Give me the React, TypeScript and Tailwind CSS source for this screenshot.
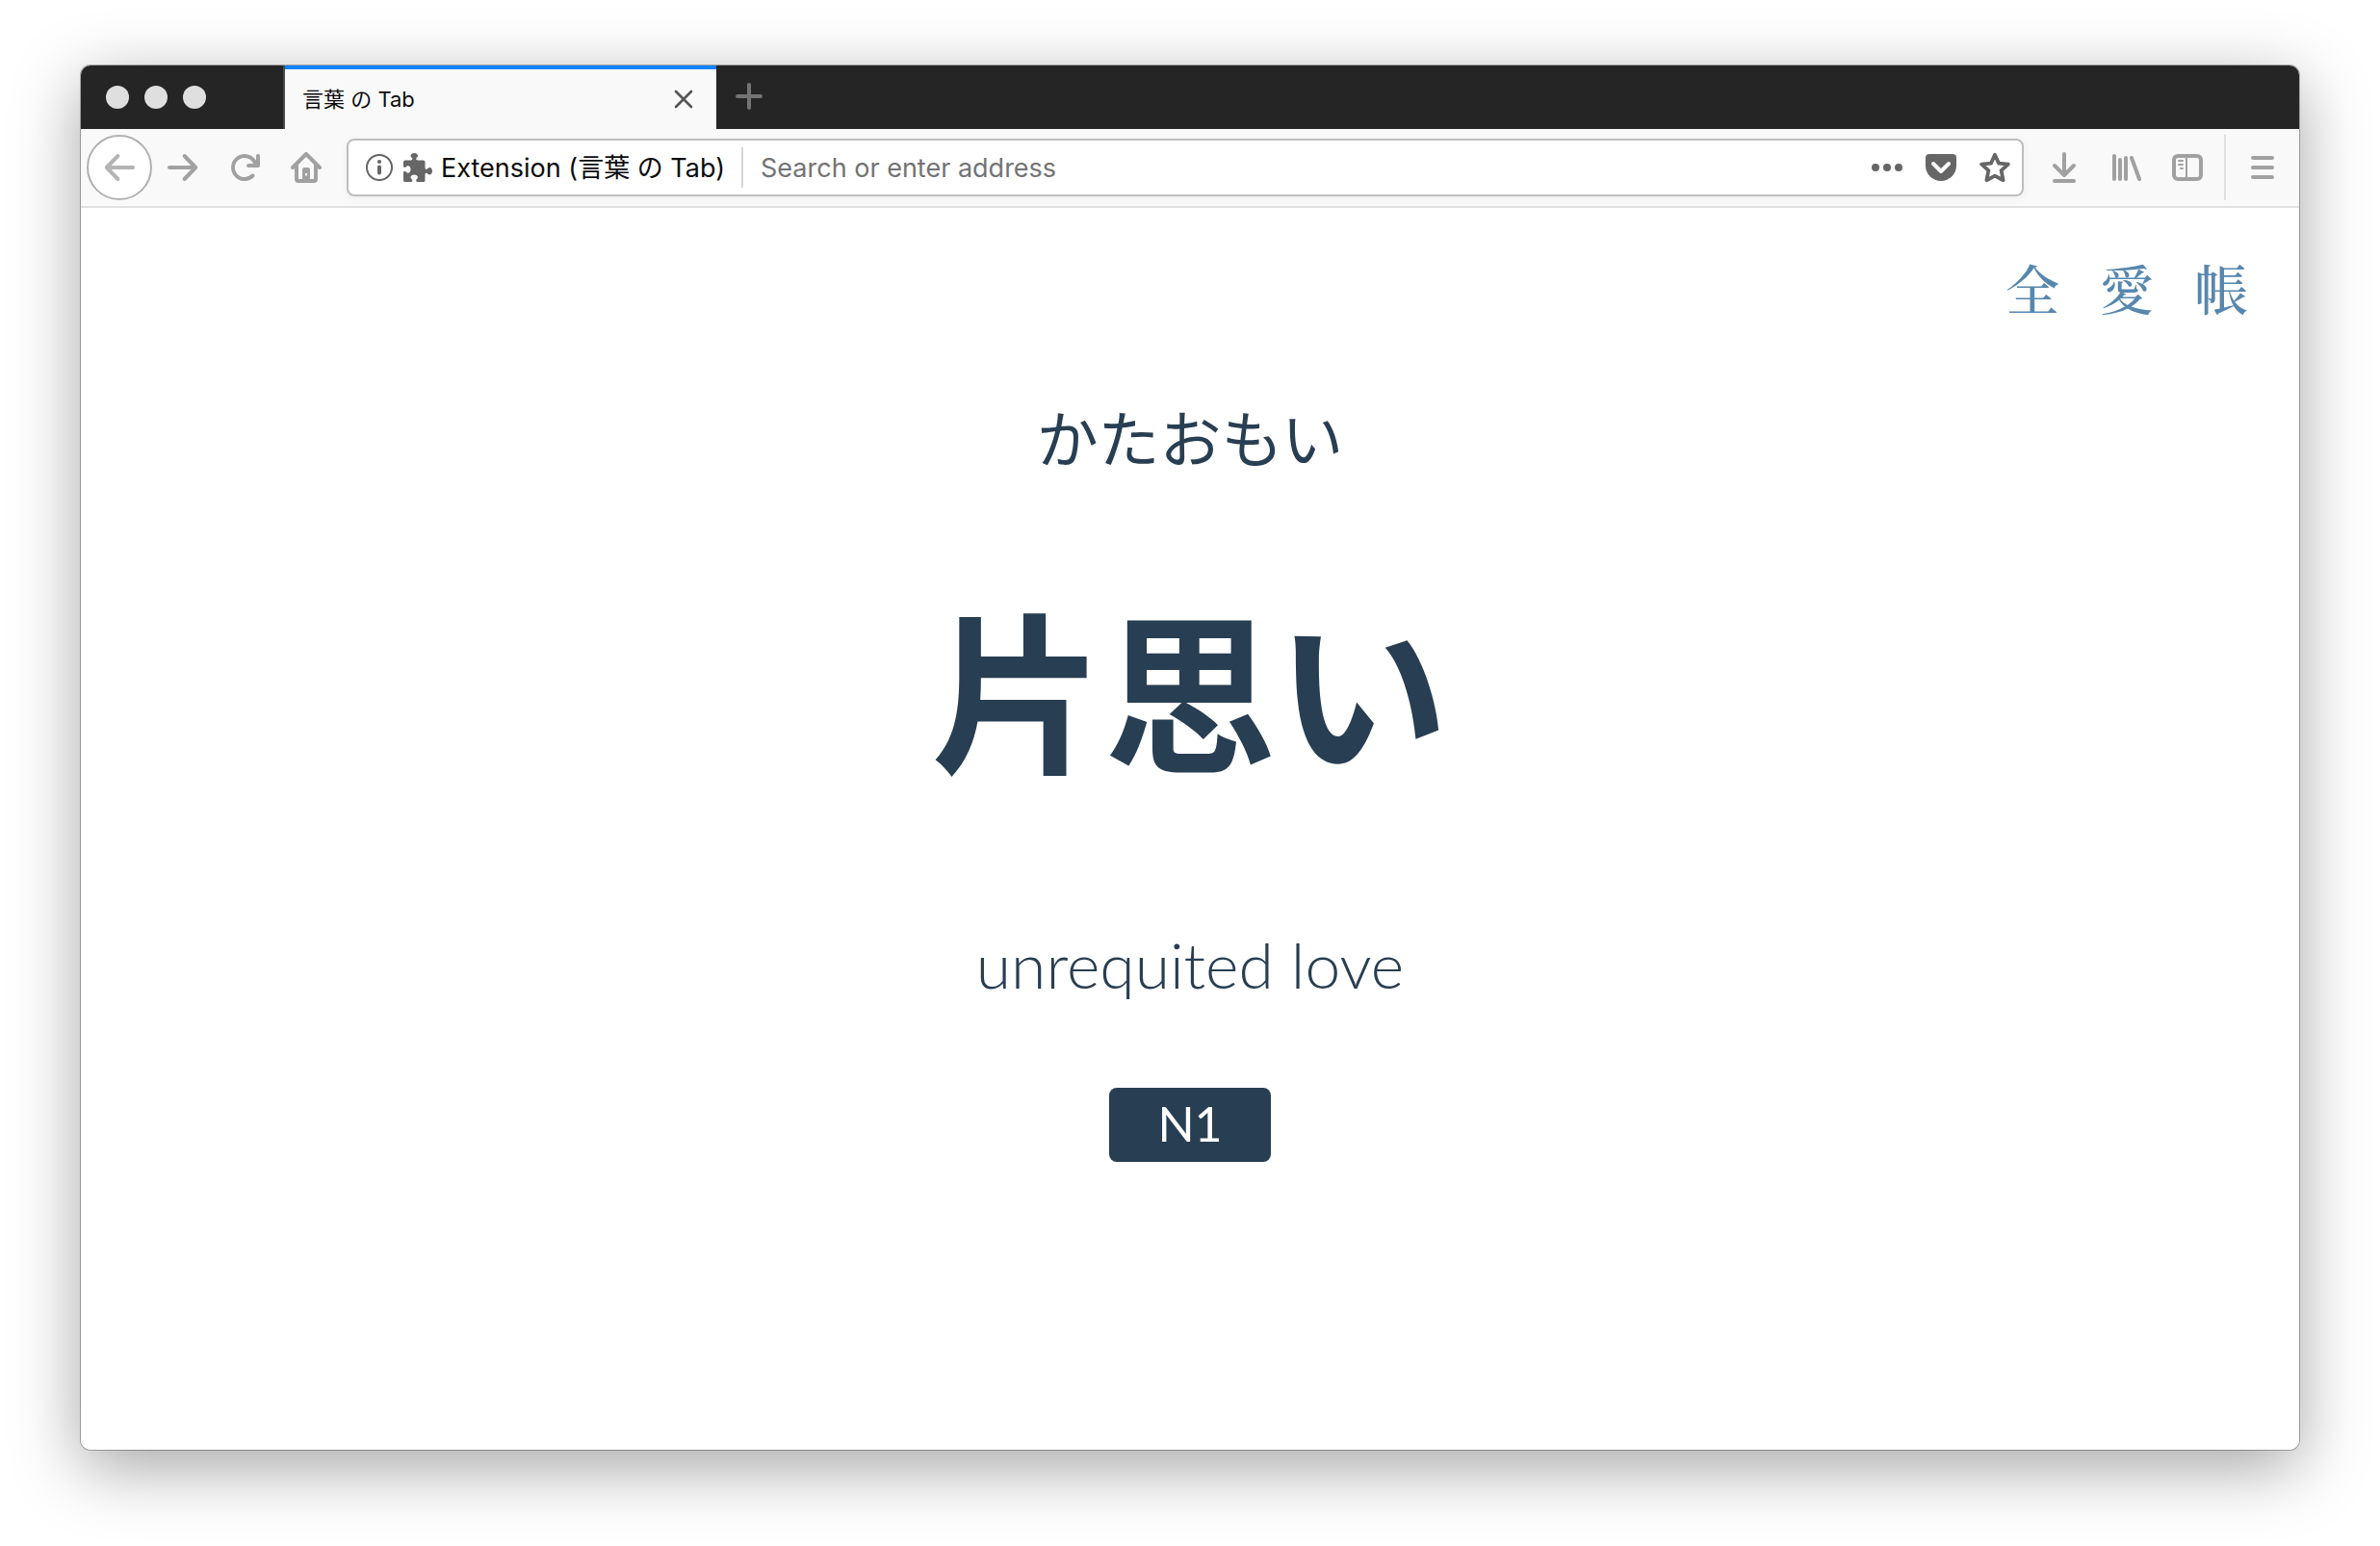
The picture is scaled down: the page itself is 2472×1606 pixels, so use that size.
import type { ReactNode } from "react";

const ui = "font-['Inter','Noto_Sans_CJK_JP',sans-serif]";

function Icon({ children, className = "size-8" }: { children: ReactNode; className?: string }) {
  return (
    <svg
      viewBox="0 0 16 16"
      className={className}
      fill="none"
      stroke="currentColor"
      strokeWidth="2"
      strokeLinecap="round"
      strokeLinejoin="round"
      aria-hidden="true"
    >
      {children}
    </svg>
  );
}

function ToolButton({ label, children }: { label: string; children: ReactNode }) {
  return (
    <button type="button" aria-label={label} className="flex h-16 w-16 shrink-0 items-center justify-center text-[#a1a1a1]">
      {children}
    </button>
  );
}

function TabBar() {
  return (
    <header className="flex h-[66px] items-stretch bg-[#252525]">
      <div className="flex w-[210px] shrink-0 items-center gap-4 pl-[26px]">
        <button type="button" aria-label="Close window" className="size-6 rounded-full bg-[#dfdfdf]" />
        <button type="button" aria-label="Minimize window" className="size-6 rounded-full bg-[#dfdfdf]" />
        <button type="button" aria-label="Zoom window" className="size-6 rounded-full bg-[#dfdfdf]" />
      </div>
      <div className="flex border-l-2 border-[#4a4a4a]">
        <div className="flex w-[448px] items-center justify-between border-t-4 border-[#0a84ff] bg-[#f9f9f9] pr-6 pl-[18px]">
          <span className="text-[22px] leading-8 text-[#0c0c0d]">言葉 の Tab</span>
          <button type="button" aria-label="Close tab" className="text-[#555555]">
            <svg viewBox="0 0 20 20" className="size-5" stroke="currentColor" strokeWidth="2.6" strokeLinecap="round" aria-hidden="true">
              <path d="M2 2l16 16M18 2L2 18" />
            </svg>
          </button>
        </div>
      </div>
      <button type="button" aria-label="New tab" className="flex w-[68px] items-center justify-center pb-[2px] text-[#747474]">
        <svg viewBox="0 0 28 28" className="size-7" stroke="currentColor" strokeWidth="4" strokeLinecap="round" aria-hidden="true">
          <path d="M14 2v24M2 14h24" />
        </svg>
      </button>
    </header>
  );
}

function AddressBar() {
  return (
    <div className="mx-[10px] flex h-[60px] min-w-0 flex-1 items-center rounded-lg border-2 border-[#bebebe] bg-white pr-3 pl-[18px] text-[27px] text-[#666666] shadow-[0_2px_8px_rgba(0,0,0,0.05)]">
      <button type="button" aria-label="Site information" className="shrink-0">
        <svg viewBox="0 0 28 28" className="size-7" fill="none" stroke="currentColor" aria-hidden="true">
          <circle cx="14" cy="14" r="13" strokeWidth="2" />
          <path d="M14 13.5v6" strokeWidth="4" strokeLinecap="round" />
          <circle cx="14" cy="8" r="2.1" fill="currentColor" stroke="none" />
        </svg>
      </button>
      <svg viewBox="0 0 16 16" className="ml-[11px] size-[30px] shrink-0" fill="currentColor" aria-hidden="true">
        <path d="M14.5 8c-.971 0-1 1-1.75 1a.765.765 0 0 1-.75-.75V5a1 1 0 0 0-1-1H7.75A.765.765 0 0 1 7 3.25c0-.75 1-.779 1-1.75C8 .635 7.1 0 6 0S4 .635 4 1.5c0 .971 1 1 1 1.75a.765.765 0 0 1-.75.75H1a1 1 0 0 0-1 1v2.25A.765.765 0 0 0 .75 8c.75 0 .779-1 1.75-1C3.365 7 4 7.9 4 9s-.635 2-1.5 2c-.971 0-1-1-1.75-1a.765.765 0 0 0-.75.75V15a1 1 0 0 0 1 1h3.25a.765.765 0 0 0 .75-.75c0-.75-1-.779-1-1.75 0-.865.9-1.5 2-1.5s2 .635 2 1.5c0 .971-1 1-1 1.75a.765.765 0 0 0 .75.75H11a1 1 0 0 0 1-1v-3.25a.765.765 0 0 1 .75-.75c.75 0 .779 1 1.75 1 .865 0 1.5-.9 1.5-2s-.635-2-1.5-2z" />
      </svg>
      <span className="ml-[9px] w-[304px] shrink-0 whitespace-nowrap pt-[2px] text-[#0c0c0d]">Extension (言葉 の Tab)</span>
      <span className="ml-2 h-[42px] w-[2px] shrink-0 bg-[#d7d7d7]" />
      <input
        type="text"
        aria-label="Search or enter address"
        placeholder="Search or enter address"
        className="ml-[18px] min-w-0 flex-1 bg-transparent pt-[2px] outline-none placeholder:text-[#737373] placeholder:opacity-100"
      />
      <div className="flex shrink-0 items-center gap-6">
        <button type="button" aria-label="Page actions">
          <Icon>
            <g fill="currentColor" stroke="none">
              <circle cx="2" cy="8" r="2" />
              <circle cx="8" cy="8" r="2" />
              <circle cx="14" cy="8" r="2" />
            </g>
          </Icon>
        </button>
        <button type="button" aria-label="Save to Pocket">
          <Icon>
            <path d="M2 1h12a2 2 0 0 1 2 2v4a8 8 0 0 1-16 0V3a2 2 0 0 1 2-2z" fill="currentColor" stroke="none" />
            <path d="M4 6l4 4 4-4" stroke="white" />
          </Icon>
        </button>
        <button type="button" aria-label="Bookmark this page">
          <Icon>
            <path d="M8 1.4l2 4.4 4.9.5-3.6 3.3 1 5L8 12.3l-4.3 2.3 1-5L1.1 6.3 6 5.8z" strokeWidth="1.9" />
          </Icon>
        </button>
      </div>
    </div>
  );
}

function Toolbar() {
  return (
    <nav aria-label="Browser toolbar" className="flex h-[82px] items-center border-b-2 border-[#e1e1e1] bg-[#f9f9f9] pl-[6px]">
      <button
        type="button"
        aria-label="Back"
        className="flex size-[68px] shrink-0 items-center justify-center rounded-full border-2 border-[#b1b1b1] bg-white text-[#b4b4b4]"
      >
        <Icon>
          <path d="M15 8H1.500M7.200 2L1.400 8l5.800 6" />
        </Icon>
      </button>
      <ToolButton label="Forward">
        <Icon>
          <path d="M1 8h13.500M8.800 2l5.800 6-5.800 6" />
        </Icon>
      </ToolButton>
      <ToolButton label="Reload">
        <Icon>
          <path
            d="M15 1a1 1 0 0 0-1 1v2.418A6.995 6.995 0 1 0 8 15a6.954 6.954 0 0 0 4.950-2.050 1 1 0 0 0-1.414-1.414A5.019 5.019 0 1 1 12.549 6H10a1 1 0 0 0 0 2h5a1 1 0 0 0 1-1V2a1 1 0 0 0-1-1z"
            fill="currentColor"
            stroke="none"
          />
        </Icon>
      </ToolButton>
      <ToolButton label="Home">
        <Icon>
          <path d="M1 8l7-7 7 7" />
          <path d="M3 7v7a1 1 0 0 0 1 1h8a1 1 0 0 0 1-1V7" />
          <path
            d="M7 8h2a1 1 0 0 1 1 1v6H6V9a1 1 0 0 1 1-1zM7.500 11v1.200h1V11z"
            fill="currentColor"
            fillRule="evenodd"
            stroke="none"
          />
        </Icon>
      </ToolButton>
      <AddressBar />
      <ToolButton label="Downloads">
        <Icon>
          <path d="M8 1v11M3 7l5 5 5-5M3 15h10" />
        </Icon>
      </ToolButton>
      <ToolButton label="Library">
        <Icon>
          <path d="M2 2v12M5 4v10M8 3v11M11 3l4 11" />
        </Icon>
      </ToolButton>
      <ToolButton label="Sidebars">
        <Icon>
          <rect x="1" y="2" width="14" height="12" rx="2" />
          <path d="M7.500 2v12" strokeWidth="1" strokeLinecap="butt" />
          <path d="M3.500 4.500h2M3.500 6.500h2M4.500 8.500h1" strokeWidth="1" />
        </Icon>
      </ToolButton>
      <span className="ml-[6px] h-[68px] w-[2px] shrink-0 bg-[#e0e0e0]" />
      <button type="button" aria-label="Open menu" className="flex h-16 w-[76px] shrink-0 items-center justify-center text-[#a1a1a1]">
        <Icon>
          <path d="M3 3h10M3 8h10M3 13h10" />
        </Icon>
      </button>
    </nav>
  );
}

const links = [
  { text: "全", href: "#all" },
  { text: "愛", href: "#love" },
  { text: "帳", href: "#notebook" },
];

function NewTabPage() {
  return (
    <div className="flex flex-1 flex-col bg-white font-['Lato','Noto_Sans_CJK_JP',sans-serif] text-[#283e52]">
      <nav aria-label="Word lists" className="flex justify-end gap-[42px] pt-[50px] pr-[53px]">
        {links.map((link) => (
          <a
            key={link.text}
            href={link.href}
            lang="ja"
            className="font-['Noto_Serif_CJK_JP','Noto_Sans_CJK_JP',serif] text-[56px] leading-[64px] font-medium text-[#5887ae]"
          >
            {link.text}
          </a>
        ))}
      </nav>
      <main className="flex flex-col items-center pt-[74px]">
        <p lang="ja" className="font-['Noto_Sans_CJK_JP',sans-serif] text-[64px] leading-[96px]">
          かたおもい
        </p>
        <h1 lang="ja" className="mt-[112px] font-['Noto_Sans_CJK_JP',sans-serif] text-[179px] leading-[200px] font-bold">
          片思い
        </h1>
        <p className="mt-[142px] text-[66px] leading-[96px] font-light">unrequited love</p>
        <span className="mt-20 flex h-[77px] w-[168px] items-center justify-center rounded-lg bg-[#283e52] pb-1 text-[50px] leading-[72px] text-white">
          N1
        </span>
      </main>
    </div>
  );
}

export default function App() {
  return (
    <div className={`flex min-h-screen bg-white px-[84px] pt-[68px] pb-[100px] ${ui}`}>
      <div className="flex min-w-0 flex-1 flex-col overflow-hidden rounded-[10px] shadow-[0_0_0_1px_rgba(0,0,0,0.28),0_18px_70px_rgba(0,0,0,0.36)]">
        <TabBar />
        <Toolbar />
        <NewTabPage />
      </div>
    </div>
  );
}
